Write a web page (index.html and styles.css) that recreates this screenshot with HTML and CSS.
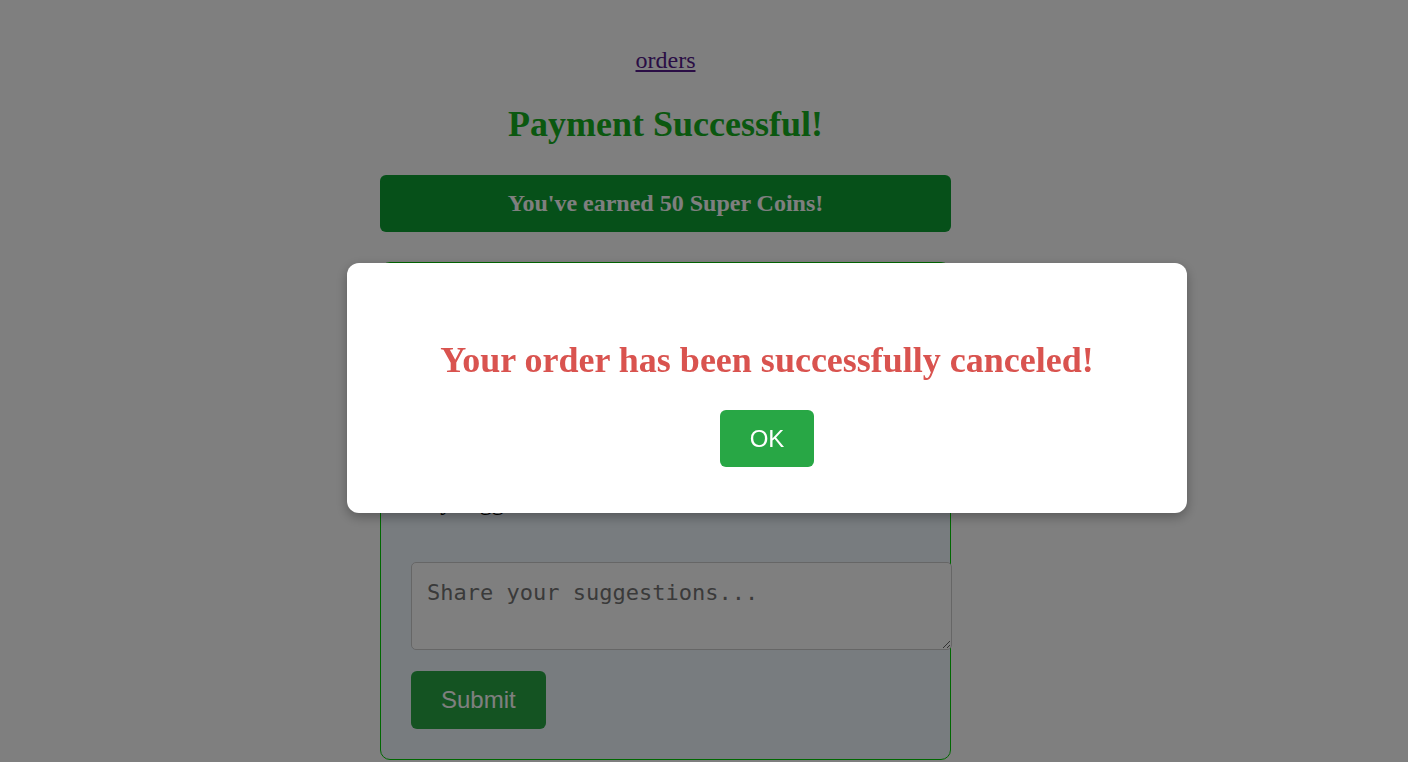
FILE: index.html
```html
<!DOCTYPE html>
<html>
<head>
<meta charset="utf-8">
<title>Payment Successful</title>
<link rel="stylesheet" href="styles.css">
</head>
<body>
<main class="page">
  <nav class="nav"><a class="nav-link" href="#">orders</a></nav>
  <h1 class="title">Payment Successful!</h1>
  <div class="coins">You've earned 50 Super Coins!</div>
  <section class="card">
    <p class="label">Any suggestions?</p>
    <textarea class="suggest" placeholder="Share your suggestions..."></textarea>
    <button class="submit">Submit</button>
  </section>
</main>
<div class="overlay">
  <div class="modal">
    <h2 class="modal-text">Your order has been successfully canceled!</h2>
    <button class="ok">OK</button>
  </div>
</div>
</body>
</html>
```
FILE: styles.css
```css
html, body {
  margin: 0;
  padding: 0;
  background: #ffffff;
  font-family: "Liberation Serif", "Times New Roman", serif;
}
.page {
  width: 571px;
  margin-left: 380px;
  display: flex;
  flex-direction: column;
}
.nav {
  padding-top: 46px;
  text-align: center;
  font-size: 24px;
  line-height: 28px;
}
.nav-link {
  color: #551a8b;
  text-decoration: underline;
}
.title {
  margin: 30px 0 0;
  text-align: center;
  font-size: 36px;
  line-height: 41px;
  font-weight: bold;
  color: #16b020;
}
.coins {
  margin-top: 30px;
  height: 57px;
  border-radius: 6px;
  background: #0ca032;
  color: #ffffff;
  font-size: 24px;
  font-weight: bold;
  line-height: 57px;
  text-align: center;
}
.card {
  margin-top: 30px;
  border: 1px solid #00d000;
  border-radius: 10px;
  background: #f0f8ff;
  padding: 30px;
  display: flex;
  flex-direction: column;
  align-items: flex-start;
  height: 436px;
}
.label {
  margin: 196px 0 0;
  font-size: 24px;
  line-height: 27px;
  color: #000;
}
.suggest {
  display: block;
  margin-top: 46px;
  width: 100%;
  height: 54px;
  padding: 17px 15px 15px;
  border: 1px solid #cccccc;
  border-radius: 5px;
  background: #ffffff;
  font-family: "DejaVu Sans Mono", monospace;
  font-size: 22px;
  line-height: 26px;
  color: #222;
  resize: vertical;
}
.suggest::placeholder {
  color: #757575;
}
.submit {
  margin-top: 21px;
  padding: 15px 30px;
  border: none;
  border-radius: 6px;
  background: #28a745;
  color: #ffffff;
  font-family: "Liberation Sans", Arial, sans-serif;
  font-size: 24px;
  line-height: 28px;
}
.overlay {
  position: fixed;
  inset: 0;
  background: rgba(0, 0, 0, 0.5);
}
.modal {
  position: absolute;
  left: 347px;
  top: 263px;
  width: 840px;
  height: 250px;
  box-sizing: border-box;
  padding-top: 77px;
  background: #ffffff;
  border-radius: 12px;
  box-shadow: 0 4px 12px rgba(0, 0, 0, 0.3);
  display: flex;
  flex-direction: column;
  align-items: center;
}
.modal-text {
  margin: 0;
  font-size: 36px;
  line-height: 41px;
  font-weight: bold;
  color: #d9534f;
}
.ok {
  margin-top: 29px;
  width: 94px;
  height: 57px;
  border: none;
  border-radius: 6px;
  background: #28a745;
  color: #ffffff;
  font-family: "Liberation Sans", Arial, sans-serif;
  font-size: 24px;
}
```
